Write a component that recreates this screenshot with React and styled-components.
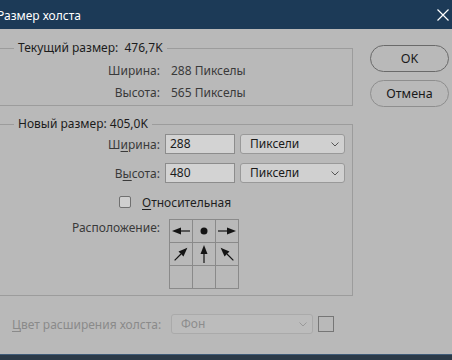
import React from 'react';
import styled, { createGlobalStyle } from 'styled-components';

const GlobalStyle = createGlobalStyle`
    html, body {
        margin: 0;
        padding: 0;
        background: #b9b9b9;
    }
    body {
        font-family: "Noto Sans", "Open Sans", sans-serif;
        font-size: 12px;
        color: #1f1f1f;
    }
`;

const Window = styled.div`
    width: 452px;
    height: 360px;
    display: flex;
    flex-direction: column;
    background: #b9b9b9;
    overflow: hidden;
`;

const TitleBar = styled.div`
    flex: none;
    height: 29px;
    background: #1c3a57;
    color: #fff;
    display: flex;
    align-items: center;
    justify-content: space-between;
    padding-right: 3px;
    font-size: 12px;
`;

const Title = styled.span`
    margin-left: -3px;
    margin-top: 1px;
`;

const Main = styled.div`
    display: flex;
    padding-top: 12px;
`;

const Groups = styled.div`
    width: 353px;
    display: flex;
    flex-direction: column;
    gap: 11px;
`;

const Group = styled.fieldset`
    margin: 0;
    min-width: 0;
    border: 1px solid #9c9c9c;
    border-left: none;
    padding: ${({ $pad }) => $pad};
`;

const Legend = styled.legend`
    margin-left: 14px;
    padding: 0 4px;
    line-height: 14px;
    color: #1c1c1c;
`;

const InfoRow = styled.div`
    display: grid;
    grid-template-columns: 160px auto;
    column-gap: 11px;
    height: 22px;
    align-items: center;
    color: #3a3a3a;
`;

const Label = styled.span`
    text-align: right;
    color: #3a3a3a;
`;

const Key = styled.span`
    text-decoration: underline;
    text-underline-offset: 2px;
`;

const FieldRow = styled.div`
    display: grid;
    grid-template-columns: 160px 70px 105px;
    column-gap: 5px;
    align-items: center;
    height: 20px;
    margin-top: ${({ $top }) => $top || 0}px;
`;

const Input = styled.div`
    height: 20px;
    box-sizing: border-box;
    border: 1px solid #8c8c8c;
    background: #d3d3d3;
    padding-left: 4px;
    line-height: 18px;
    color: #1a1a1a;
`;

const Select = styled.div`
    height: 20px;
    box-sizing: border-box;
    border: 1px solid ${({ $disabled }) => ($disabled ? '#aaaaaa' : '#999999')};
    border-radius: 3px;
    background: ${({ $disabled }) => ($disabled ? '#bcbcbc' : '#d0d0d0')};
    color: ${({ $disabled }) => ($disabled ? '#8c8c8c' : '#1a1a1a')};
    display: flex;
    align-items: center;
    justify-content: space-between;
    padding: 0 5px 0 9px;
    line-height: 18px;
`;

const CheckRow = styled.div`
    display: flex;
    align-items: center;
    gap: 11px;
    padding-left: 119px;
    margin-top: 13px;
    height: 12px;
    color: #1f1f1f;
`;

const CheckBox = styled.span`
    width: 12px;
    height: 12px;
    box-sizing: border-box;
    border: 1px solid #707070;
    border-radius: 2px;
    background: #cfcfcf;
`;

const AnchorRow = styled.div`
    display: grid;
    grid-template-columns: 160px auto;
    column-gap: 9px;
    margin-top: 11px;
`;

const AnchorLabel = styled.span`
    text-align: right;
    color: #3a3a3a;
    line-height: 14px;
    margin-top: 2px;
`;

const AnchorGrid = styled.div`
    display: grid;
    grid-template-columns: repeat(3, 22px);
    grid-auto-rows: 22px;
    gap: 1px;
    padding: 1px;
    background: #8a8a8a;
    width: max-content;
`;

const Cell = styled.div`
    background: #b9b9b9;
    display: flex;
    align-items: center;
    justify-content: center;
`;

const Buttons = styled.div`
    display: flex;
    flex-direction: column;
    gap: 8px;
    padding: 4px 0 0 17px;
`;

const Button = styled.div`
    width: 79px;
    height: 27px;
    box-sizing: border-box;
    border: 1px solid ${({ $primary }) => ($primary ? '#6a6a6a' : '#8e8e8e')};
    border-radius: 14px;
    display: flex;
    align-items: center;
    justify-content: center;
    color: #1a1a1a;
    font-size: 12.5px;
`;

const Bottom = styled.div`
    flex: 1;
    display: grid;
    grid-template-columns: 154px 142px 16px;
    column-gap: 5px;
    align-items: center;
    padding: 0 0 2px 12px;
    color: #8a8a8a;
`;

const Swatch = styled.span`
    width: 16px;
    height: 16px;
    box-sizing: border-box;
    border: 1px solid #767676;
`;

const Footer = styled.div`
    flex: none;
    height: 5px;
    background: #2b3a48;
    border-top: 1px solid #3f5b78;
`;

const Chevron = ({ color = '#555' }) => (
    <svg width="8" height="5" viewBox="0 0 8 5">
        <path d="M0.5 0.5 L4 4 L7.5 0.5" fill="none" stroke={color} strokeWidth="1" />
    </svg>
);

const CloseIcon = () => (
    <svg width="12" height="12" viewBox="0 0 12 12">
        <path d="M0.5 0.5 L11.5 11.5 M11.5 0.5 L0.5 11.5" stroke="#fff" strokeWidth="1.2" />
    </svg>
);

const Arrow = ({ rotate }) => (
    <svg width="22" height="22" viewBox="0 0 22 22">
        <g transform={`rotate(${rotate} 11 11)`} fill="#141414" stroke="#141414">
            <line x1="11" y1="11" x2="11" y2="20" strokeWidth="1.2" />
            <polygon points="11,2 7.5,11 14.5,11" stroke="none" />
        </g>
    </svg>
);

const Dot = () => (
    <svg width="22" height="22" viewBox="0 0 22 22">
        <circle cx="11" cy="11" r="3.5" fill="#141414" />
    </svg>
);

const anchors = [
    <Arrow rotate={-90} />,
    <Dot />,
    <Arrow rotate={90} />,
    <Arrow rotate={45} />,
    <Arrow rotate={0} />,
    <Arrow rotate={-45} />,
    null,
    null,
    null,
];

const App = () => {
    return (
        <Window>
            <GlobalStyle />
            <TitleBar>
                <Title>Размер холста</Title>
                <CloseIcon />
            </TitleBar>
            <Main>
                <Groups>
                    <Group $pad="4px 0 2px 0">
                        <Legend>Текущий размер:&nbsp; 476,7K</Legend>
                        <InfoRow>
                            <Label>Ширина:</Label>
                            <span>288 Пикселы</span>
                        </InfoRow>
                        <InfoRow>
                            <Label>Высота:</Label>
                            <span>565 Пикселы</span>
                        </InfoRow>
                    </Group>
                    <Group $pad="3px 0 6px 0">
                        <Legend>Новый размер: 405,0K</Legend>
                        <FieldRow>
                            <Label>Ш<Key>и</Key>рина:</Label>
                            <Input>288</Input>
                            <Select>Пиксели<Chevron /></Select>
                        </FieldRow>
                        <FieldRow $top={9}>
                            <Label>В<Key>ы</Key>сота:</Label>
                            <Input>480</Input>
                            <Select>Пиксели<Chevron /></Select>
                        </FieldRow>
                        <CheckRow>
                            <CheckBox />
                            <span><Key>О</Key>тносительная</span>
                        </CheckRow>
                        <AnchorRow>
                            <AnchorLabel>Расположение:</AnchorLabel>
                            <AnchorGrid>
                                {anchors.map((a, i) => (
                                    <Cell key={i}>{a}</Cell>
                                ))}
                            </AnchorGrid>
                        </AnchorRow>
                    </Group>
                </Groups>
                <Buttons>
                    <Button $primary>OK</Button>
                    <Button>Отмена</Button>
                </Buttons>
            </Main>
            <Bottom>
                <span><Key>Ц</Key>вет расширения холста:</span>
                <Select $disabled>Фон<Chevron color="#999" /></Select>
                <Swatch />
            </Bottom>
            <Footer />
        </Window>
    );
};

export default App;
